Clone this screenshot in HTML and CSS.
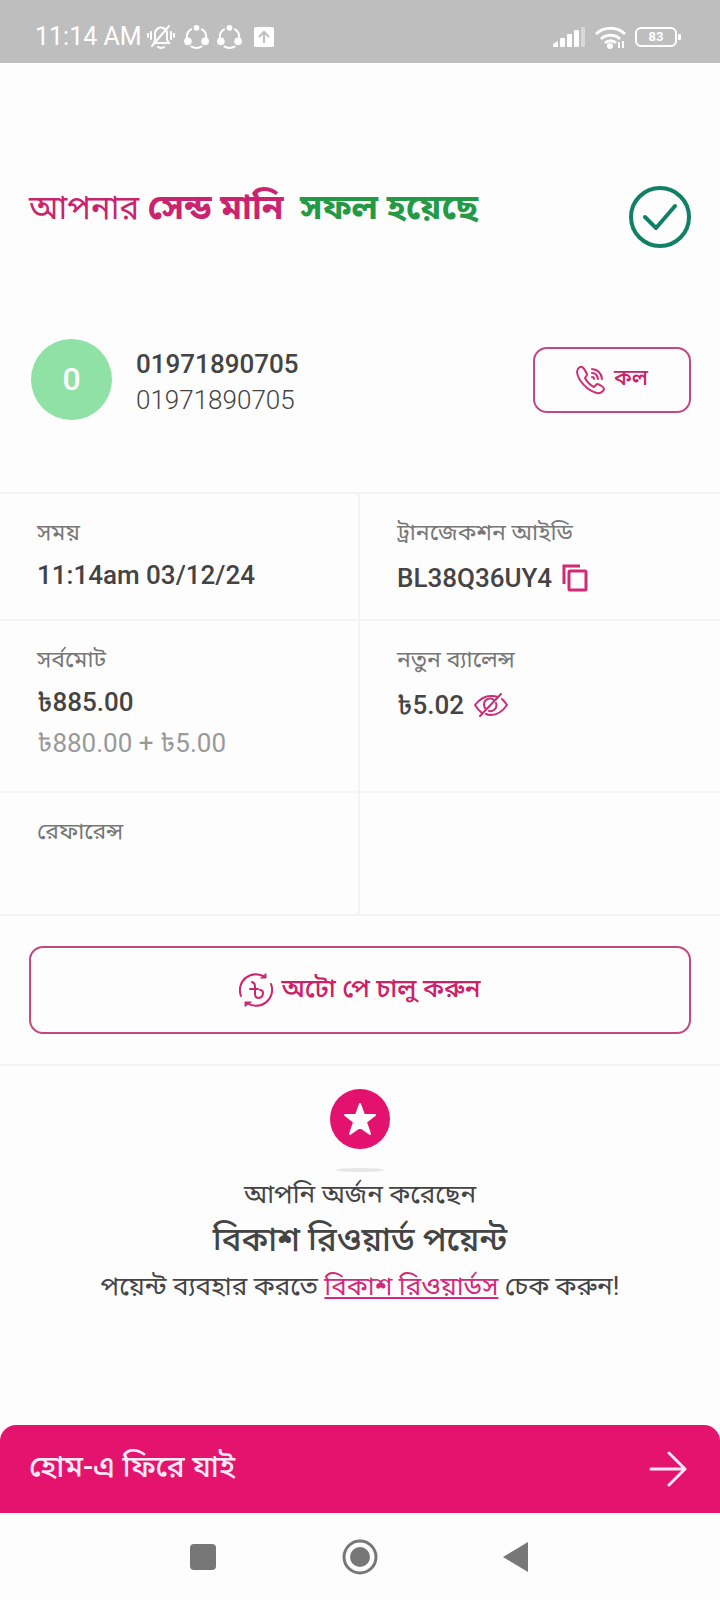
FILE: index.html
```html
<!DOCTYPE html>
<html lang="bn">
<head>
<meta charset="utf-8">
<meta name="viewport" content="width=device-width, initial-scale=1">
<title>সেন্ড মানি</title>
<link rel="stylesheet" href="styles.css">
</head>
<body>
<div class="screen">
  <header class="status">
    <div class="status-left">
      <time class="clock">11:14 AM</time>
      <svg class="bell" width="30" height="28" viewBox="0 0 30 28" fill="none" stroke="#fff" stroke-width="2" stroke-linecap="round">
        <path d="M8 20h15l-2-3V11a6 6 0 0 0-4-6 6 6 0 0 0-8 6v6z"/><path d="M6 23 23 3"/><path d="M12 24q3 2 6 0M5 9v7M2 11v3M25 9v7M28 11v3"/>
      </svg>
      <svg width="25" height="25" viewBox="0 0 26 26"><g fill="none" stroke="#fff" stroke-width="2"><path d="M8 5a10 10 0 0 0-5 10M18 5a10 10 0 0 1 5 10M7 23a11 11 0 0 0 12 0"/></g><g fill="#fff"><circle cx="13" cy="4" r="3"/><circle cx="4" cy="18" r="4"/><circle cx="22" cy="18" r="4"/></g></svg>
      <svg width="25" height="25" viewBox="0 0 26 26"><g fill="none" stroke="#fff" stroke-width="2"><path d="M8 5a10 10 0 0 0-5 10M18 5a10 10 0 0 1 5 10M7 23a11 11 0 0 0 12 0"/></g><g fill="#fff"><circle cx="13" cy="4" r="3"/><circle cx="4" cy="18" r="4"/><circle cx="22" cy="18" r="4"/></g></svg>
      <svg class="upload" width="20" height="20" viewBox="0 0 20 20"><rect width="20" height="20" rx="2" fill="#fff"/><path d="M10 16V5M5 10l5-5 5 5" fill="none" stroke="#bebebe" stroke-width="2"/></svg>
    </div>
    <div class="status-right">
      <svg width="34" height="22" viewBox="0 0 34 22" fill="#fff"><path d="M0 21v-3l5-3v6z"/><rect x="7" y="12" width="5" height="9" rx="1"/><rect x="14" y="8" width="5" height="13" rx="1"/><rect x="21" y="4" width="5" height="17" rx="1"/><rect x="28" y="1" width="4" height="20" rx="1" opacity=".4"/></svg>
      <svg width="32" height="24" viewBox="0 0 32 24"><g fill="none" stroke="#fff" stroke-width="3"><path d="M1 9a21 21 0 0 1 29 0M6 14a14 14 0 0 1 19 0M10 18a8 8 0 0 1 11 0"/></g><circle cx="15" cy="21" r="3" fill="#fff"/><path d="M24 23v-6M28 16v7" stroke="#fff" stroke-width="2"/></svg>
      <div class="battery"><span class="battery-body">83</span><span class="battery-tip"></span></div>
    </div>
  </header>

  <main class="content">
    <section class="result">
      <h1 class="title">আপনার <b>সেন্ড মানি</b>  <b class="ok">সফল হয়েছে</b></h1>
      <svg width="62" height="62" viewBox="0 0 62 62" fill="none" stroke="#128066"><circle cx="31" cy="31" r="29" stroke-width="4"/><path d="M16 31l11 11L46 20" stroke-width="4" stroke-linecap="round" stroke-linejoin="round"/></svg>
    </section>

    <section class="contact">
      <div class="avatar">0</div>
      <div class="contact-text">
        <div class="contact-name">01971890705</div>
        <div class="contact-number">01971890705</div>
      </div>
      <button class="outline call" type="button">
        <svg width="30" height="30" viewBox="0 0 30 30" fill="none" stroke="#d02c72" stroke-width="2" stroke-linecap="round" stroke-linejoin="round"><path d="M6 2C4 1 1 4 1 7c1 9 11 19 20 21 3 1 7-2 7-4s-5-5-7-5l-3 3c-4-2-7-5-9-9l2-3C11 8 8 3 6 2z"/><path d="M16 12q2 0 2 2M16 8q5 0 6 6M16 4q9 1 10 10"/></svg>
        কল
      </button>
    </section>

    <dl class="details">
      <div class="cell"><dt>সময়</dt><dd>11:14am 03/12/24</dd></div>
      <div class="cell"><dt>ট্রানজেকশন আইডি</dt>
        <dd class="with-icon">BL38Q36UY4
          <button class="icon-button" type="button" aria-label="কপি"><svg width="26" height="28" viewBox="0 0 26 28" fill="none" stroke="#cf2a75" stroke-width="3"><path d="M18 2H2v18"/><rect x="7" y="7" width="17" height="19" rx="1"/></svg></button>
        </dd></div>
      <div class="cell tall"><dt>সর্বমোট</dt><dd>৳885.00</dd><dd class="breakdown">৳880.00 + ৳5.00</dd></div>
      <div class="cell tall"><dt>নতুন ব্যালেন্স</dt>
        <dd class="with-icon">৳5.02
          <button class="icon-button" type="button" aria-label="লুকান"><svg width="34" height="24" viewBox="0 0 34 24" fill="none" stroke="#c72e76" stroke-width="2" stroke-linecap="round" stroke-linejoin="round"><path d="M8 20Q4 17 1 12 8 3 17 3q4 0 7 1M28 6q3 3 5 6-7 10-16 10-3 0-5-1"/><path d="M12 16a6 6 0 0 1 8-9M22 10a6 6 0 0 1-7 8M6 23 27 1M15 14l4-5"/></svg></button>
        </dd></div>
      <div class="cell last"><dt>রেফারেন্স</dt></div>
      <div class="cell last"></div>
    </dl>

    <section class="autopay">
      <button class="outline wide" type="button">
        <svg width="34" height="34" viewBox="0 0 34 34" fill="none" stroke="#ce266d" stroke-width="2" stroke-linecap="round"><path d="M2 23A16 16 0 0 1 26 4"/><path d="M32 11A16 16 0 0 1 8 30"/><path d="M22 5h5V1zM12 29H6v4z" fill="#ce266d" stroke-width="1"/><path d="M13 9q3 1 3 4v8q0 4 4 4 4-1 4-5 0-3-3-3M11 16h8"/></svg>
        অটো পে চালু করুন
      </button>
    </section>

    <section class="reward">
      <svg class="star" width="60" height="60" viewBox="0 0 60 60"><circle cx="30" cy="30" r="30" fill="#e3126f"/><path d="M30 15l4 11h11l-9 7 4 12-10-7-10 7 4-12-9-7h11z" fill="#fff" stroke="#fff" stroke-width="2" stroke-linejoin="round"/></svg>
      <div class="shadow"></div>
      <p class="earned">আপনি অর্জন করেছেন</p>
      <h2 class="points">বিকাশ রিওয়ার্ড পয়েন্ট</h2>
      <p class="hint">পয়েন্ট ব্যবহার করতে <a href="#">বিকাশ রিওয়ার্ডস</a> চেক করুন!</p>
    </section>
  </main>

  <button class="home" type="button">
    <span>হোম-এ ফিরে যাই</span>
    <svg width="38" height="36" viewBox="0 0 38 36" fill="none" stroke="#ffe6f4" stroke-width="3" stroke-linecap="round" stroke-linejoin="round"><path d="M2 18h34M20 2l16 16-16 16"/></svg>
  </button>

  <nav class="system">
    <button class="icon-button" type="button" aria-label="Recent"><svg width="26" height="26"><rect width="26" height="26" rx="4" fill="#777"/></svg></button>
    <button class="icon-button" type="button" aria-label="Home"><svg width="36" height="36" viewBox="0 0 36 36"><circle cx="18" cy="18" r="16" fill="none" stroke="#777" stroke-width="3"/><circle cx="18" cy="18" r="10" fill="#777"/></svg></button>
    <button class="icon-button" type="button" aria-label="Back"><svg width="26" height="30" viewBox="0 0 26 30"><path d="M25 0v30L0 15z" fill="#777"/></svg></button>
  </nav>
</div>
</body>
</html>
```
FILE: styles.css
```css
* { box-sizing: border-box; }
body, h1, h2, p, dl, dd, dt { margin: 0; }
body {
  background: #fdfdfd;
  color: #444;
  font-family: Roboto, "Noto Sans Bengali", "Noto Sans", sans-serif;
  font-size: 26px;
}
button { font: inherit; color: inherit; background: none; border: 0; padding: 0; cursor: pointer; }
svg { display: block; flex: none; }

.screen { min-height: 100vh; display: flex; flex-direction: column; }

.status {
  height: 63px;
  padding: 10px 39px 0 35px;
  background: #bebebe;
  color: #fff;
  display: flex;
  align-items: center;
  justify-content: space-between;
}
.status-left { display: flex; align-items: center; gap: 8px; }
.clock { font-size: 25px; line-height: 30px; }
.bell { margin-left: -4px; }
.upload { margin-left: 4px; }
.status-right { display: flex; align-items: center; gap: 8px; }
.battery { display: flex; align-items: center; gap: 1px; }
.battery-body {
  width: 42px;
  height: 20px;
  border: 2px solid #fff;
  border-radius: 6px;
  font-size: 13px;
  font-weight: 700;
  line-height: 16px;
  text-align: center;
}
.battery-tip { width: 3px; height: 6px; border-radius: 1px; background: #fff; }

.content { flex: 1; }
.result {
  display: flex;
  justify-content: space-between;
  padding: 123px 29px 0;
}
.title { color: #c9246d; font-size: 33px; font-weight: 400; line-height: 44px; white-space: pre-wrap; }
.title b { font-size: 35px; }
.title .ok { color: #249a47; }

.contact {
  display: flex;
  align-items: center;
  gap: 24px;
  padding: 91px 29px 72px 31px;
}
.avatar {
  width: 81px;
  height: 81px;
  border-radius: 50%;
  background: #8fe1a5;
  color: #fff;
  font-size: 32px;
  font-weight: 500;
  line-height: 81px;
  text-align: center;
}
.contact-text { flex: 1; padding-top: 4px; line-height: 36px; }
.contact-name { font-weight: 500; }
.contact-number { font-weight: 300; }
.outline {
  display: flex;
  align-items: center;
  justify-content: center;
  gap: 8px;
  border: 2px solid #c2487f;
  border-radius: 14px;
  color: #cc2069;
  font-weight: 500;
}
.call { width: 158px; height: 66px; font-size: 22px; }

.details { display: grid; grid-template-columns: 1fr 1fr; border-top: 2px solid #f4f4f4; }
.cell {
  min-height: 127px;
  padding: 24px 37px 0;
  border-bottom: 2px solid #f4f4f4;
}
.cell:nth-child(odd) { border-right: 2px solid #f4f4f4; }
.tall { min-height: 172px; }
.last { min-height: 123px; }
dt { color: #777; font-size: 23px; line-height: 30px; }
dd { margin-top: 9px; font-weight: 500; line-height: 36px; }
.breakdown { margin-top: 5px; color: #999; font-weight: 400; }
.with-icon { display: flex; align-items: center; gap: 10px; margin-top: 12px; }

.autopay { padding: 30px 29px; border-bottom: 2px solid #f4f4f4; }
.wide { width: 100%; height: 88px; font-size: 26px; }

.reward { padding-top: 23px; text-align: center; }
.star { margin: 0 auto; }
.shadow { width: 48px; height: 4px; margin: 19px auto 4px; border-radius: 50%; background: #e5e5e5; }
.earned, .hint { font-size: 26px; line-height: 36px; }
.points { font-size: 33px; font-weight: 500; line-height: 56px; }
.hint a { color: #d4287a; }

.home {
  width: 100%;
  height: 88px;
  padding: 0 33px 0 29px;
  display: flex;
  align-items: center;
  justify-content: space-between;
  border-radius: 16px 16px 0 0;
  background: #e3136e;
  color: #ffeaf5;
  font-size: 30px;
  font-weight: 500;
}
.system {
  height: 87px;
  padding: 0 191px 0 190px;
  display: flex;
  align-items: center;
  justify-content: space-between;
}
```
